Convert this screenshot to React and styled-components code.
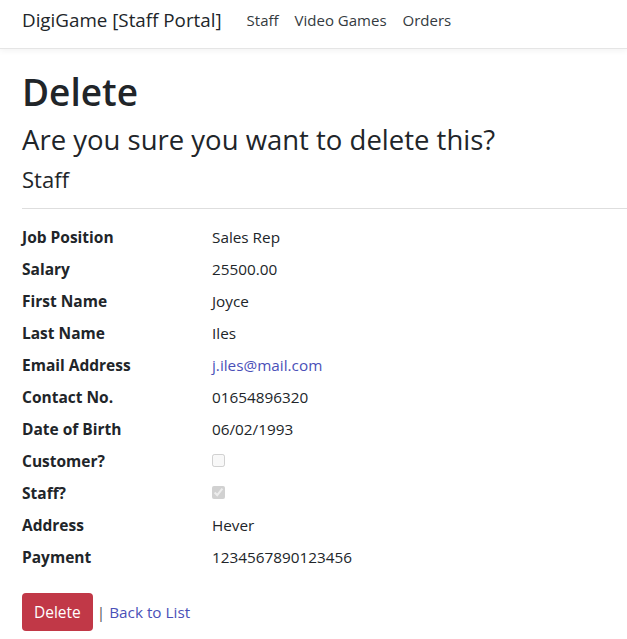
import React from 'react';
import styled, { createGlobalStyle } from 'styled-components';

const GlobalStyle = createGlobalStyle`
    body {
        margin: 0;
        font-family: "Open Sans", "Noto Sans", sans-serif;
        font-size: 16px;
        line-height: 1.5;
        color: #212529;
        background: #fff;
    }
`;

const staffRows = [
    { label: 'Job Position', value: 'Sales Rep' },
    { label: 'Salary', value: '25500.00' },
    { label: 'First Name', value: 'Joyce' },
    { label: 'Last Name', value: 'Iles' },
    { label: 'Email Address', value: 'j.iles@mail.com', link: true },
    { label: 'Contact No.', value: '01654896320' },
    { label: 'Date of Birth', value: '06/02/1993' },
    { label: 'Customer?', check: false },
    { label: 'Staff?', check: true },
    { label: 'Address', value: 'Hever' },
    { label: 'Payment', value: '1234567890123456' },
];

export default function App() {
    return (
        <>
            <GlobalStyle />
            <Navbar>
                <Brand href="#">DigiGame [Staff Portal]</Brand>
                <NavList>
                    <NavItem href="#">Staff</NavItem>
                    <NavItem href="#">Video Games</NavItem>
                    <NavItem href="#">Orders</NavItem>
                </NavList>
            </Navbar>

            <Main>
                <H1>Delete</H1>
                <H3>Are you sure you want to delete this?</H3>
                <H4>Staff</H4>
                <Hr />
                <Details>
                    {staffRows.map((row, index) => (
                        <React.Fragment key={index}>
                            <Dt>{row.label}</Dt>
                            <Dd>
                                {row.check !== undefined ? (
                                    <CheckBox type="checkbox" checked={row.check} disabled readOnly />
                                ) : row.link ? (
                                    <TextLink href="#">{row.value}</TextLink>
                                ) : (
                                    row.value
                                )}
                            </Dd>
                        </React.Fragment>
                    ))}
                </Details>

                <Actions>
                    <DangerButton type="button">Delete</DangerButton>
                    <Pipe>|</Pipe>
                    <TextLink href="#">Back to List</TextLink>
                </Actions>
            </Main>
        </>
    );
}

// 스타일

const Navbar = styled.nav`
    height: 49px;
    box-sizing: border-box;
    display: flex;
    align-items: center;
    padding: 0 22px 8px;
    border-bottom: 1px solid #e5e5e5;
    box-shadow: 0 2px 6px rgba(0, 0, 0, 0.05);
`;

const Brand = styled.a`
    margin-right: 25px;
    font-size: 18.8px;
    color: #212529;
    text-decoration: none;
`;

const NavList = styled.div`
    display: flex;
    gap: 16px;
`;

const NavItem = styled.a`
    font-size: 15px;
    color: #343a40;
    text-decoration: none;
`;

const Main = styled.main`
    padding: 21px 0 0 22px;
`;

const H1 = styled.h1`
    margin: 0 0 9px;
    font-size: 37px;
    font-weight: 600;
    line-height: 1.2;
`;

const H3 = styled.h3`
    margin: 0 0 9px;
    font-size: 27.5px;
    font-weight: 500;
    line-height: 1.2;
`;

const H4 = styled.h4`
    margin: 0;
    font-size: 22px;
    font-weight: 500;
    line-height: 1.3;
`;

const Hr = styled.hr`
    margin: 14px 0 16px;
    border: 0;
    border-top: 1px solid #dedede;
`;

const Details = styled.dl`
    display: grid;
    grid-template-columns: 190px 1fr;
    margin: 0 0 16px;
`;

const Dt = styled.dt`
    margin-bottom: 8px;
    font-size: 15.5px;
    line-height: 24px;
    font-weight: 700;
`;

const Dd = styled.dd`
    margin: 0 0 8px;
    font-size: 15.3px;
    line-height: 24px;
    display: flex;
    align-items: center;
`;

const CheckBox = styled.input`
    width: 13px;
    height: 13px;
    margin: 0;
`;

const TextLink = styled.a`
    color: #4a50b8;
    text-decoration: none;
`;

const Actions = styled.div`
    display: flex;
    align-items: center;
    gap: 4px;
    font-size: 15.3px;
`;

const Pipe = styled.span`
    color: #555a60;
`;

const DangerButton = styled.button`
    height: 38px;
    padding: 0 12px;
    border: 0;
    border-radius: 4px;
    background: #c13847;
    color: #fff;
    font-family: inherit;
    font-size: 15.5px;
`;
